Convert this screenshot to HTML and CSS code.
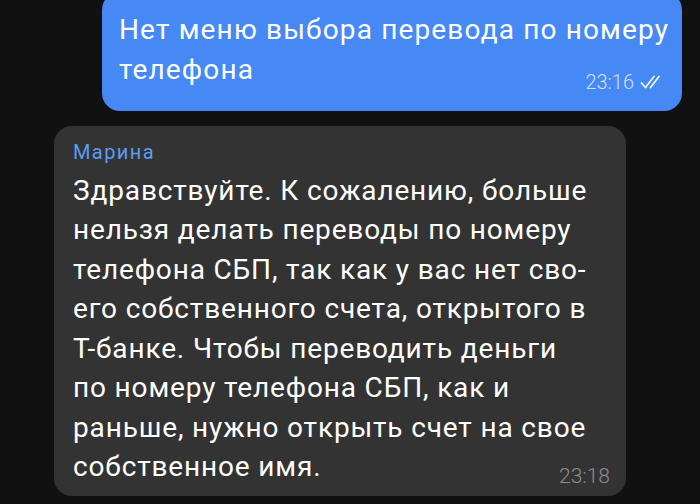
FILE: index.html
```html
<!DOCTYPE html>
<html lang="ru">
<head>
<meta charset="utf-8">
<link rel="stylesheet" href="styles.css">
</head>
<body>
<div class="chat">
  <div class="bubble out">
    <div class="text">Нет меню выбора перевода по номеру<br>телефона</div>
    <div class="meta">
      <span class="time">23:16</span>
      <svg class="checks" width="24" height="14" viewBox="0 0 24 14"><path d="M1.5 8 L5.5 12.5 L14 1.5 M10.5 12.5 L19 1.5" fill="none" stroke="currentColor" stroke-width="1.8" stroke-linecap="round" stroke-linejoin="round"/></svg>
    </div>
  </div>
  <div class="bubble in">
    <div class="name">Марина</div>
    <div class="text">Здравствуйте. К сожалению, больше<br>нельзя делать переводы по номеру<br>телефона СБП, так как у вас нет сво-<br>его собственного счета, открытого в<br>Т-банке. Чтобы переводить деньги<br>по номеру телефона СБП, как и<br>раньше, нужно открыть счет на свое<br>собственное имя.</div>
    <div class="meta">
      <span class="time">23:18</span>
    </div>
  </div>
</div>
</body>
</html>
```
FILE: styles.css
```css
html, body {
  margin: 0;
  padding: 0;
  background: #111111;
  width: 700px;
  height: 504px;
  overflow: hidden;
}
.chat {
  display: flex;
  flex-direction: column;
  font-family: Roboto, "Liberation Sans", sans-serif;
  color: #ffffff;
}
.bubble {
  box-sizing: border-box;
  border-radius: 18px;
}
.out {
  align-self: flex-end;
  width: 580px;
  margin-right: 18px;
  margin-top: -8px;
  background: #4689f5;
  padding: 18.4px 18px 18.8px 17px;
}
.in {
  align-self: flex-start;
  width: 572px;
  margin-left: 54px;
  margin-top: 15px;
  background: #333333;
  padding: 14px 16px 10px 19px;
}
.text {
  font-size: 28px;
  line-height: 40px;
  letter-spacing: 1px;
  white-space: nowrap;
}
.out .text {
  letter-spacing: 1.15px;
}
.in .text {
  line-height: 39.5px;
  letter-spacing: 0.85px;
}
.name {
  font-size: 20px;
  line-height: 24px;
  letter-spacing: 1.4px;
  color: #5b9cf3;
  margin-bottom: 6.5px;
}
.meta {
  display: flex;
  justify-content: flex-end;
  align-items: center;
  gap: 6px;
  font-size: 20px;
  line-height: 20px;
  font-weight: 300;
}
.out .meta {
  margin-top: -18.2px;
  color: #cfe0fc;
}
.in .meta {
  margin-top: -20.9px;
  font-size: 21px;
  color: #8d8d8d;
}
.checks {
  display: block;
  color: #eef4ff;
}
```
